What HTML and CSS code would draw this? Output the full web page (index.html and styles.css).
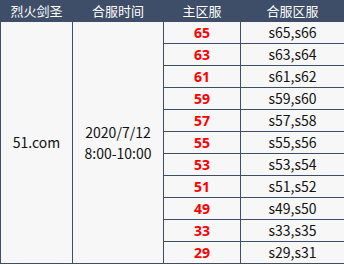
FILE: index.html
```html
<!DOCTYPE html>
<html lang="zh">
<head>
<meta charset="utf-8">
<link rel="stylesheet" href="styles.css">
</head>
<body>
<table class="merge-table">
  <colgroup>
    <col class="c1"><col class="c2"><col class="c3"><col class="c4">
  </colgroup>
  <thead>
    <tr><th>烈火剑圣</th><th>合服时间</th><th>主区服</th><th>合服区服</th></tr>
  </thead>
  <tbody>
    <tr><td rowspan="11">51.com</td><td rowspan="11" class="time">2020/7/12<br>8:00-10:00</td><td class="main">65</td><td>s65,s66</td></tr>
    <tr><td class="main">63</td><td>s63,s64</td></tr>
    <tr><td class="main">61</td><td>s61,s62</td></tr>
    <tr><td class="main">59</td><td>s59,s60</td></tr>
    <tr><td class="main">57</td><td>s57,s58</td></tr>
    <tr><td class="main">55</td><td>s55,s56</td></tr>
    <tr><td class="main">53</td><td>s53,s54</td></tr>
    <tr><td class="main">51</td><td>s51,s52</td></tr>
    <tr><td class="main">49</td><td>s49,s50</td></tr>
    <tr><td class="main">33</td><td>s33,s35</td></tr>
    <tr><td class="main">29</td><td>s29,s31</td></tr>
  </tbody>
</table>
</body>
</html>
```

FILE: styles.css
```css
html, body {
  margin: 0;
  padding: 0;
  background: #ffffff;
}
.merge-table {
  width: 344px;
  table-layout: fixed;
  border-collapse: collapse;
  font-family: "Noto Sans CJK SC", "Noto Sans", sans-serif;
  font-size: 14px;
  color: #111111;
  background: #f7f7f7;
}
.c1 { width: 72px; }
.c2 { width: 91px; }
.c3 { width: 77px; }
.c4 { width: 104px; }
.merge-table th,
.merge-table td {
  border: 1px solid #3e4e68;
  padding: 0;
  height: 21px;
  line-height: 21px;
  text-align: center;
  vertical-align: middle;
}
.merge-table th {
  background: #3e4e68;
  color: #ffffff;
  font-size: 13px;
  font-weight: normal;
  border-top: 0;
}
.merge-table .main {
  color: #ff0000;
  font-weight: bold;
  font-family: "Noto Sans", "Noto Sans CJK SC", sans-serif;
}
.merge-table .time {
  line-height: 21px;
}
```
